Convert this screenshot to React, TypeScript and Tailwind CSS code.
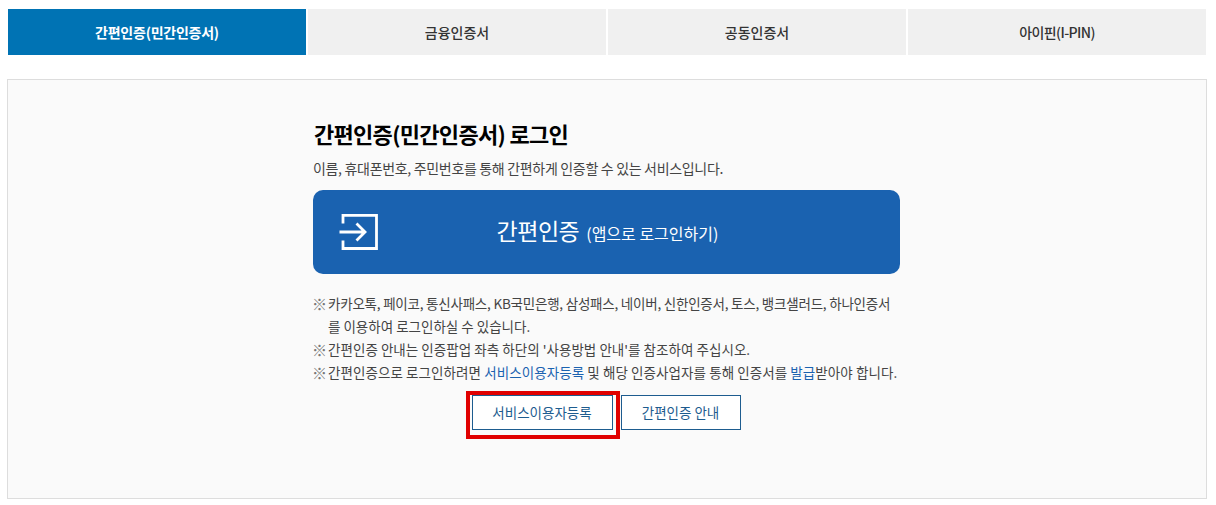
import React from "react";

const tabs = [
  { label: "간편인증(민간인증서)", cls: "bg-[#0073b4] text-white font-bold tracking-[-0.25px]" },
  { label: "금융인증서", cls: "bg-[#f0f0f0] text-[#333] font-medium" },
  { label: "공동인증서", cls: "bg-[#f0f0f0] text-[#333] font-medium" },
  { label: "아이핀(I-PIN)", cls: "bg-[#f0f0f0] text-[#333] font-medium tracking-[-0.6px]" },
];

export default function App() {
  return (
    <div className="w-[1216px] h-[505px] bg-white px-[7px] pt-[9px] font-['Noto_Sans_CJK_KR',sans-serif]">
      {/* Tabs */}
      <div className="flex gap-[2px] pl-px pr-[3px]">
        {tabs.map((tab) => (
          <div key={tab.label} className={"flex-1 h-[46px] flex items-center justify-center text-[14px] " + tab.cls}>
            {tab.label}
          </div>
        ))}
      </div>

      {/* Panel */}
      <div className="mt-[24px] h-[420px] w-[1200px] border border-[#dddddd] bg-[#fafafa] pl-[305px] pt-[37px]">
        <div className="w-[587px]">
          <h2 className="pl-px text-[22px] leading-[32px] font-bold text-black tracking-[-0.7px]">간편인증(민간인증서) 로그인</h2>
          <p className="mt-[9px] text-[14px] leading-[20px] text-[#444] tracking-[-0.32px] whitespace-nowrap">
            이름, 휴대폰번호, 주민번호를 통해 간편하게 인증할 수 있는 서비스입니다.
          </p>

          <div className="mt-[12px] h-[84px] rounded-[10px] bg-[#1a62b0] flex items-center text-white">
            <svg className="ml-[26px] shrink-0" width="40" height="36" viewBox="0 0 40 36" fill="none" stroke="white" strokeWidth="2.8">
              <path d="M4 9.5V1.4H37.5V34.5H4V26.5" />
              <path d="M0.5 18H26M17.5 9.5L26 18L17.5 26.5" />
            </svg>
            <div className="flex-1 pr-[64px] pb-[4px] flex items-baseline justify-center gap-[7px]">
              <span className="text-[23px] leading-[30px] font-normal tracking-[-0.5px]">간편인증</span>
              <span className="text-[16px] font-normal">(앱으로 로그인하기)</span>
            </div>
          </div>

          <ul className="mt-[18px] text-[13.5px] leading-[23px] text-[#444]">
            <li className="pl-[15px] relative whitespace-nowrap">
              <span className="absolute left-[-1px] top-0 text-[15px] text-[#777]">※</span>
              <span className="tracking-[-0.22px]">카카오톡, 페이코, 통신사패스, KB국민은행, 삼성패스, 네이버, 신한인증서, 토스, 뱅크샐러드, 하나인증서</span>
              <br />를 이용하여 로그인하실 수 있습니다.
            </li>
            <li className="pl-[15px] relative whitespace-nowrap tracking-[0.04px]">
              <span className="absolute left-[-1px] top-0 text-[15px] text-[#777]">※</span>
              간편인증 안내는 인증팝업 좌측 하단의 '사용방법 안내'를 참조하여 주십시오.
            </li>
            <li className="pl-[15px] relative whitespace-nowrap tracking-[0.08px]">
              <span className="absolute left-[-1px] top-0 text-[15px] text-[#777]">※</span>
              간편인증으로 로그인하려면 <span className="text-[#1a62b0]">서비스이용자등록</span> 및 해당 인증사업자를 통해 인증서를{" "}
              <span className="text-[#1a62b0]">발급</span>받아야 합니다.
            </li>
          </ul>

          <div className="mt-[11px] flex justify-center gap-[8px] pr-[1px]">
            <button className="relative w-[141px] h-[35px] border border-[#1d5c8f] bg-white text-[13.5px] text-[#1d5c8f]">
              서비스이용자등록
              <span className="absolute left-[-7px] right-[-8px] top-[-5px] bottom-[-10px] border-[4px] border-[#e00000]" />
            </button>
            <button className="w-[120px] h-[35px] border border-[#1d5c8f] bg-white text-[13.5px] text-[#1d5c8f]">
              간편인증 안내
            </button>
          </div>
        </div>
      </div>
    </div>
  );
}
